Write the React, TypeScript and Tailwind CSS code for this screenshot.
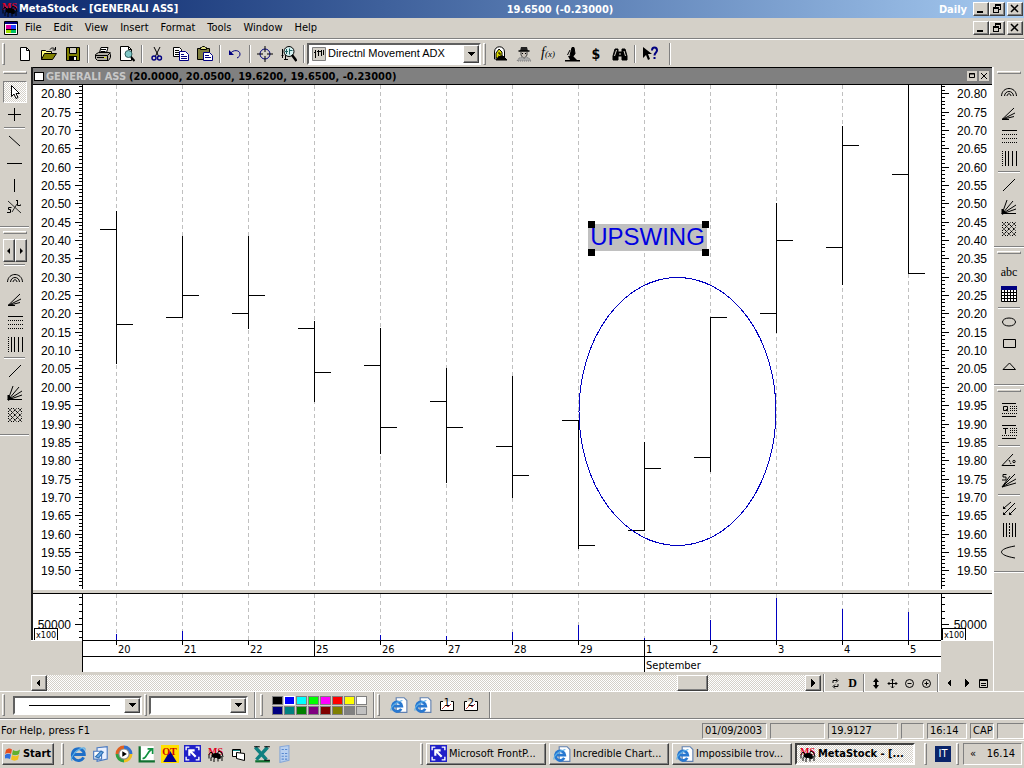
import type { ReactNode } from "react";

/* Shared bevel styles */
const RAISED =
  "bg-[#d4d0c8] border border-t-white border-l-white border-r-[#404040] border-b-[#404040] shadow-[inset_-1px_-1px_0_#808080]";
const SUNKEN =
  "border border-t-[#808080] border-l-[#808080] border-r-white border-b-white";
const DITHER =
  "bg-[repeating-conic-gradient(#ffffff_0_25%,#d4d0c8_0_50%)] bg-[size:2px_2px]";

/* ---------- Data ---------- */

type Bar = {
  day: string;
  open: number;
  high: number;
  low: number;
  close: number;
  volume: number;
};

const BARS: Bar[] = [
  { day: "20", open: 20.43, high: 20.48, low: 20.065, close: 20.17, volume: 6 },
  { day: "21", open: 20.19, high: 20.41, low: 20.19, close: 20.25, volume: 9 },
  { day: "22", open: 20.2, high: 20.41, low: 20.16, close: 20.25, volume: 0 },
  { day: "25", open: 20.16, high: 20.18, low: 19.96, close: 20.04, volume: 0 },
  { day: "26", open: 20.06, high: 20.16, low: 19.82, close: 19.89, volume: 5 },
  { day: "27", open: 19.96, high: 20.05, low: 19.74, close: 19.89, volume: 4 },
  { day: "28", open: 19.84, high: 20.03, low: 19.7, close: 19.76, volume: 8 },
  { day: "29", open: 19.91, high: 19.91, low: 19.56, close: 19.57, volume: 15 },
  { day: "1", open: 19.61, high: 19.85, low: 19.61, close: 19.78, volume: 2 },
  { day: "2", open: 19.81, high: 20.19, low: 19.77, close: 20.19, volume: 20 },
  { day: "3", open: 20.2, high: 20.5, low: 20.15, close: 20.4, volume: 42 },
  { day: "4", open: 20.38, high: 20.71, low: 20.28, close: 20.66, volume: 31 },
  { day: "5", open: 20.58, high: 20.85, low: 20.31, close: 20.31, volume: 28 },
];

const MENUS = ["File", "Edit", "View", "Insert", "Format", "Tools", "Window", "Help"];

const PALETTE = [
  "#000000", "#0000ff", "#00ffff", "#00ff00", "#ff00ff", "#ff0000", "#ffff00", "#ffffff",
  "#000080", "#008080", "#008000", "#800080", "#800000", "#808000", "#808080", "#c0c0c0",
];

const PANE_H = 504;
const PLOT_W = 858;
const priceY = (p: number) => Math.round(8.3 + (20.8 - p) * 366.9);
const barX = (i: number) => 33 + i * 66;

/* ---------- Icons ---------- */

function Icon({ children, size = 16 }: { children: ReactNode; size?: number }) {
  return (
    <svg
      width={size}
      height={size}
      viewBox="0 0 16 16"
      fill="none"
      stroke="#000"
      aria-hidden="true"
      className="shrink-0"
    >
      {children}
    </svg>
  );
}

const icons = {
  app: (
    <Icon>
      <text x="0" y="9" fontSize="10" fill="#e00020" stroke="none" className="font-['Liberation_Serif',serif] font-bold">
        MS
      </text>
      <ellipse cx="8" cy="9.500" rx="4.500" ry="2.500" fill="#000" stroke="none" />
      <ellipse cx="11" cy="11.500" rx="2" ry="1.500" fill="#000" stroke="none" />
      <path d="M5 8 3 6 1 8.500v4M5 10l-2 1.500V15M7 11l-1 2v3M9 8l2-3 3 2 1 4M12 10l2 1v4M10 11v4.500" />
    </Icon>
  ),
  doc: (
    <Icon>
      <path d="M1.500 1.500h13v13h-13z" fill="#fff" />
      <path d="M2 2h12v2H2z" fill="#000080" stroke="none" />
      <path d="M3 5h5v4H3z" fill="#e000a0" stroke="none" />
      <path d="M8 5h5v4H8z" fill="#2040ff" stroke="none" />
      <path d="M3 10h5v3H3z" fill="#a0e000" stroke="none" />
      <path d="M8 10h5v3H8z" fill="#00c060" stroke="none" />
      <path d="M3 9.500h10" />
    </Icon>
  ),
  newFile: (
    <Icon>
      <path d="M3.500 1.500h6l3 3v10h-9z" fill="#fff" />
      <path d="M9.500 1.500v3h3" />
    </Icon>
  ),
  open: (
    <Icon>
      <path d="M.5 13.500v-9h4l1 1h5v2" fill="#ffff80" />
      <path d="M.5 13.500l3-6h12l-4 6z" fill="#808000" />
      <path d="M9 3.500c1-2 4-2 5 0M14.500 1v3h-3" />
    </Icon>
  ),
  save: (
    <Icon>
      <path d="M1.500 1.500h13v13h-13z" fill="#808000" />
      <path d="M4.500 1.500h7v6h-7z" fill="#d4d0c8" />
      <path d="M4 10h8v4.500H4z" fill="#000" stroke="none" />
      <path d="M9 11h2v3H9z" fill="#fff" stroke="none" />
    </Icon>
  ),
  print: (
    <Icon>
      <path d="M4.500 6.500l1.500-5h7l-1.500 5" fill="#fff" />
      <path d="M6 3.500h5M5.500 5.500h5" />
      <path d="M.5 8.500l3-2h11l1 2v3l-2 3h-11l-2-2z" fill="#b0aca4" />
      <path d="M.5 9.500h12l3-3M12.500 9.500v5M2 11.500h9" />
      <path d="M9 11.500h2" stroke="#e0e000" />
    </Icon>
  ),
  preview: (
    <Icon>
      <path d="M1.500.5h8l3 3v11h-11z" fill="#fff" />
      <path d="M9.500.5v3h3" />
      <circle cx="9.500" cy="8" r="3.500" fill="#80c8c8" stroke="#306060" />
      <path d="M12 11l3.500 4" strokeWidth="2" />
    </Icon>
  ),
  cut: (
    <Icon>
      <path d="M5 1l4.500 9M11 1L6.500 10" />
      <circle cx="5" cy="12" r="2" stroke="#000080" strokeWidth="1.400" />
      <circle cx="10.500" cy="12" r="2" stroke="#000080" strokeWidth="1.400" />
    </Icon>
  ),
  copy: (
    <Icon>
      <path d="M.5 1.500h6l2 2v7h-8z" fill="#fff" />
      <path d="M2 4.500h4M2 6.500h5M2 8.500h5" />
      <path d="M6.500 5.500h6l3 3v6h-9z" fill="#fff" stroke="#000080" />
      <path d="M8 8.500h3M8 10.500h6M8 12.500h6" stroke="#000080" />
    </Icon>
  ),
  paste: (
    <Icon>
      <path d="M.5 2.500h12v11H.5z" fill="#808040" />
      <path d="M3.500 3.500h6v-2h-1l-1-1h-2l-1 1h-1z" fill="#e0e080" />
      <path d="M6.500 6.500h6l3 3v5h-9z" fill="#fff" stroke="#000080" />
      <path d="M8 9.500h4M8 11.500h6" stroke="#000080" />
    </Icon>
  ),
  undo: (
    <Icon>
      <path d="M3 8c3-5 10-4 10 0 0 2-1 3-3 4" stroke="#000080" />
      <path d="M2 4v5h5z" fill="#000080" stroke="none" />
    </Icon>
  ),
  crosshair: (
    <Icon>
      <circle cx="8" cy="8" r="5" stroke="#000080" />
      <path d="M8 0v6M8 10v6M0 8h6M10 8h6" />
    </Icon>
  ),
  zoom: (
    <Icon>
      <path d="M1.500 3v9M.5 9.500h2M4.500 9v5M3 13.500h4" />
      <circle cx="8" cy="5.500" r="5" fill="#d4f0f0" />
      <path d="M5.500 3v5M8.500 2.500v6M4 5.500h3M8.500 4.500h3" stroke="#206060" />
      <path d="M11 9l4.500 6" strokeWidth="2.500" />
    </Icon>
  ),
  indicator: (
    <Icon>
      <path d="M1.500 1.500h13v13h-13z" fill="#d4d0c8" stroke="#808080" />
      <path d="M4.500 4v8M3 6.500h2M7.500 4v6M6 5.500h3M10.500 4v6M9 5.500h2M12.500 4v5" />
    </Icon>
  ),
  expert: (
    <Icon>
      <path d="M2.500 13V6c0-7 10-7 10 0v7z" fill="#fff" />
      <path d="M4 12V7l3-4 3 3v6z" fill="#d8d800" />
      <path d="M7 6v2h2M6 10l4 2" />
      <path d="M8 10h3l4 4H4z" fill="#000" />
    </Icon>
  ),
  advisor: (
    <Icon>
      <path d="M5 1h6l1 4H4z" fill="#222" stroke="none" />
      <path d="M2.500 5h11" strokeWidth="1.500" />
      <path d="M5 6v3l2 3h2l2-3V6" fill="#c8c0b8" stroke="#444" />
      <path d="M6 7.500h1M9 7.500h1" />
      <path d="M1 15l2-3 4-1 1 2 1-2 4 1 2 3z" fill="#aaa" stroke="#777" strokeDasharray="1 1" />
    </Icon>
  ),
  microscope: (
    <Icon>
      <path d="M8 1.500h2l1 6-2 3-3-1z" fill="#000" />
      <path d="M6 4L3.500 9" />
      <path d="M4 10h5l4 4h3v1.500H1V14h5z" fill="#000" stroke="none" />
    </Icon>
  ),
  binoculars: (
    <Icon>
      <path d="M3 3h3v3h4V3h3l2 7v4h-5v-4H6v4H1v-4z" fill="#000" />
      <path d="M4.500 4L2.500 10M12 5l1.500 5M8 7v2" stroke="#d4d0c8" />
    </Icon>
  ),
  helpArrow: (
    <Icon>
      <path d="M1 1v11l3-3 2 5 2-1-2-5h4z" fill="#000" stroke="none" />
      <path d="M10 4.500c0-4 5-4 5 0 0 2-2.500 2-2.500 5M12.500 11v2" stroke="#000080" strokeWidth="2" />
    </Icon>
  ),
  pointer: (
    <Icon>
      <path d="M4.500 1.500v11l2.500-2.500 2 4.500 2-1-2-4h3.500z" fill="#fff" />
    </Icon>
  ),
  plus: <Icon><path d="M7.500 2v13M1 8.500h13" /></Icon>,
  down: <Icon><path d="M2 3l11 10" /></Icon>,
  horizontal: <Icon><path d="M0 8.500h15" /></Icon>,
  vertical: <Icon><path d="M7.500 2v13" /></Icon>,
  speed: (
    <Icon>
      <path d="M1 2l13 12M5 13l5-8" strokeWidth=".8" />
      <path d="M4.500 8.500h-3v2h2v3H0M9 1.500h2M10.500 1.500v5h3v-1" />
    </Icon>
  ),
  arcs: (
    <Icon>
      <path d="M.5 12C1 2 15 2 15.500 12M3.500 12c.5-6 8.500-6 9 0M6 12c.5-3 3.500-3 4 0" />
    </Icon>
  ),
  fan: <Icon><path d="M1 13.500h7M1 13.500L13 2M1 13.500L14 7M1 13.500l12-3" /></Icon>,
  dashes: (
    <Icon>
      <path d="M1 2.500h15" />
      <path d="M1 6.500h15M1 10.500h15M1 14.500h15" strokeDasharray="1 1" />
    </Icon>
  ),
  bars: (
    <Icon>
      <path d="M1.500 1v15" strokeDasharray="1 1" />
      <path d="M4.500 1v15M7.500 1v15M11.500 1v15M15.500 1v15" />
    </Icon>
  ),
  slash: <Icon><path d="M2 14L14 2" /></Icon>,
  fan2: (
    <Icon>
      <path d="M1 15L6 1M1 15L12 2M1 15L15 6M1 15L15 10M1 14.500h14" />
      <path d="M1 15v-5l4 4z" fill="#000" />
    </Icon>
  ),
  mesh: (
    <Icon>
      <path
        d="M1 5l4-4M1 10l9-9M1 15L15 1M6 15l9-9M11 15l4-4M11 1l4 4M6 1l9 9M1 1l14 14M1 6l9 9M1 11l4 4"
        strokeDasharray="1.500 .6"
      />
    </Icon>
  ),
  grid: (
    <Icon>
      <path d="M.5.5h15v15H.5z" fill="#fff" />
      <path d="M0 0h16v4H0z" fill="#000080" stroke="none" />
      <path d="M3.500 4v12M6.500 4v12M9.500 4v12M12.500 4v12M0 6.500h16M0 9.500h16M0 12.500h16" />
    </Icon>
  ),
  ellipse: <Icon><ellipse cx="8" cy="9" rx="6.500" ry="4" /></Icon>,
  rect: <Icon><path d="M2.500 4.500h12v8h-12z" /></Icon>,
  triangle: <Icon><path d="M2 12.500L8.500 6l6 6.500z" /></Icon>,
  quadrant: (
    <Icon>
      <path d="M1 1.500h14M1 14.500h14M2.500 4.500h4v4h-4zM5 7l2 2.500" />
      <path d="M9 4.500h7M9 6.500h7M9 8.500h7M1 11.500h15" strokeDasharray="1 1" />
    </Icon>
  ),
  tirone: (
    <Icon>
      <path d="M1 1.500h14M1 14.500h14M2 4.500h5M4.500 4v6" />
      <path d="M9 4.500h7M9 6.500h7M9 8.500h7M1 11.500h15" strokeDasharray="1 1" />
    </Icon>
  ),
  angle: (
    <Icon>
      <path d="M14 14.500H1L12 3" />
      <path d="M8 9l2 4" strokeDasharray="2 1" />
      <circle cx="13" cy="10.500" r="1.200" />
    </Icon>
  ),
  speedFan: (
    <Icon>
      <path d="M1 14L9 3M1 14L14 1M1 14l14-8M1 14l14-4" />
      <path d="M5.500 1.500H2v2.500h3v3H1" />
    </Icon>
  ),
  arrows: (
    <Icon>
      <path d="M3 8l7-6M3 14L14 3M9 14l6-6" />
      <path d="M2 6v3h3zM2 12v3h3zM8 12v3h3z" fill="#000" stroke="none" />
    </Icon>
  ),
  channels: (
    <Icon>
      <path d="M2.500 1v14M5.500 1v14M11.500 1v14M14.500 1v14" />
      <path d="M8.500 1v14" strokeDasharray="2 1" />
    </Icon>
  ),
  curve: <Icon><path d="M14 2C-4 5-4 11 14 14" /></Icon>,
  ie: (
    <Icon size={18}>
      <path d="M13 11a5.300 5.300 0 1 1 .6-2.500H4" stroke="#1f6fc8" strokeWidth="2.600" />
      <path d="M3 14c-3-1 2-9 8-11 3-1 4 0 3 2" stroke="#58aee8" />
    </Icon>
  ),
  iePage: (
    <Icon size={18}>
      <path d="M5.500 1.500h7l2.500 2.500v10.500H5.500z" fill="#fff" stroke="#6080b0" />
      <path d="M10 11.500a4.200 4.200 0 1 1 .5-2.500H3" stroke="#2878d0" strokeWidth="2.400" />
      <path d="M1 13c-1-3 4-8 10-9" stroke="#58aee8" />
    </Icon>
  ),
  desktop: (
    <Icon size={18}>
      <path d="M4.500 2.500l9-1v11l-9 2z" fill="#e8f0ff" stroke="#4878c0" />
      <path d="M1.500 5.500h7v7h-7z" fill="#fff" stroke="#4878c0" />
      <path d="M3 10.500l5-5 2 1-4 5z" fill="#68a8e8" stroke="#3070b0" />
    </Icon>
  ),
  media: (
    <Icon size={18}>
      <path d="M8 2a6 6 0 0 0-6 6" stroke="#e06020" strokeWidth="3" />
      <path d="M2 8a6 6 0 0 0 6 6" stroke="#30a040" strokeWidth="3" />
      <path d="M8 14a6 6 0 0 0 6-6" stroke="#f0c020" strokeWidth="3" />
      <path d="M14 8a6 6 0 0 0-6-6" stroke="#3070d0" strokeWidth="3" />
      <circle cx="8" cy="8" r="4.500" fill="#fff" stroke="#888" />
      <path d="M6.500 5.500l4 2.500-4 2.500z" fill="#000" stroke="none" />
    </Icon>
  ),
  chart: (
    <Icon size={18}>
      <path d="M1 1h13v14H1z" fill="#fff" stroke="none" />
      <path d="M1.500 1v13.500H15" stroke="#107030" strokeWidth="2" />
      <path d="M4 12c4 0 3-5 8-8M8.500 3.500H13V8" stroke="#109040" strokeWidth="1.500" />
    </Icon>
  ),
  quote: (
    <Icon size={18}>
      <path d="M0 0h16v16H0z" fill="#ffe000" stroke="none" />
      <path d="M8 5l6 10H2z" fill="#000090" stroke="none" />
      <text x="1" y="9" fontSize="9" fill="#d00000" stroke="none" className="font-['Liberation_Serif',serif] font-bold">
        OT
      </text>
    </Icon>
  ),
  frontpage: (
    <Icon size={17}>
      <path d="M0 0h16v16H0z" fill="#2020c8" stroke="none" />
      <path d="M2 5V2h3M11 2h3v3M14 11v3h-3M5 14H2v-3" stroke="#fff" strokeWidth="1.300" />
      <path d="M5 10V5h5M5.500 5.500L11 11" stroke="#fff" strokeWidth="2" />
    </Icon>
  ),
  windows2: (
    <Icon>
      <path d="M1.500 3.500h8v7h-8z" fill="#fff" />
      <path d="M5.500 6.500l8 1v7l-8-2z" fill="#fff" />
      <path d="M2 4.500h7" stroke="#108080" />
    </Icon>
  ),
  excel: (
    <Icon size={18}>
      <path d="M2 13.500h13v2H2z" fill="#107030" stroke="none" />
      <path d="M2 2l10 11M13 2L3 13" stroke="#108080" strokeWidth="3" />
      <path d="M1 1.500h5M10 1.500h5M10 13.500h5" />
    </Icon>
  ),
  calc: (
    <Icon size={18}>
      <path d="M3.500 1.500l8-1v13l-8 2z" fill="#b8d0f0" stroke="#88a8d8" />
      <path d="M5 4h5M5 7.500h5M5 10h5M5 12.500h5" stroke="#5888d0" strokeDasharray="2 1" />
    </Icon>
  ),
  box: (
    <Icon>
      <path d="M4 4.500H1.500v9h13v-9H12" fill="#fff" />
      <path d="M3 12l4-4 2 2 3-3" stroke="#c04040" />
    </Icon>
  ),
  winLogo: (
    <Icon>
      <path d="M1 4c2-2 4-2 6-.5L6 8C4 6.500 2 7 0 8z" fill="#e85020" stroke="none" />
      <path d="M8 4c2 1.500 4 1.500 7-.5L14 8c-2 1.500-5 1.500-7 .5z" fill="#60b030" stroke="none" />
      <path d="M0 9c2-1.500 4-1.500 6-.5L5 13c-2-1-4-1-6 0z" fill="#3070e0" stroke="none" />
      <path d="M7 9c2 1.500 4 1.500 7 0l-1 4.500c-2 1.500-5 1.500-7 0z" fill="#f0c020" stroke="none" />
    </Icon>
  ),
};

type IconName = keyof typeof icons;

/* ---------- Small building blocks ---------- */

function ToolButton({ label, children }: { label: string; children: ReactNode }) {
  return (
    <button type="button" aria-label={label} className="flex h-[22px] w-6 shrink-0 items-center justify-center">
      {children}
    </button>
  );
}

function Grip() {
  return <span className="h-[22px] w-[3px] shrink-0 border border-t-white border-l-white border-r-[#808080] border-b-[#808080]" />;
}

function Sep() {
  return (
    <span className="flex w-1.5 shrink-0 justify-center">
      <span className="h-[18px] w-0.5 border-l border-l-[#808080] border-r border-r-white" />
    </span>
  );
}

function HSep() {
  return (
    <span className="flex h-[5px] w-full items-center px-1">
      <span className="h-0.5 w-full border-t border-t-[#808080] border-b border-b-white" />
    </span>
  );
}

function Arrow({ dir }: { dir: "left" | "right" | "down" }) {
  const d = { left: "M6 1v8L2 5z", right: "M3 1v8l4-4z", down: "M1 3h8L5 7z" }[dir];
  return (
    <svg width="10" height="10" viewBox="0 0 10 10" aria-hidden="true" shapeRendering="crispEdges">
      <path d={d} />
    </svg>
  );
}

function DropArrow() {
  return (
    <span className={`pointer-events-none absolute top-0.5 right-0.5 bottom-0.5 flex w-4 items-center justify-center ${RAISED}`}>
      <Arrow dir="down" />
    </span>
  );
}

function WindowButtons() {
  const cls = `flex h-[14px] w-4 items-center justify-center ${RAISED}`;
  return (
    <div className="flex shrink-0 items-center">
      <button type="button" aria-label="Minimize" className={cls}>
        <svg width="10" height="10" viewBox="0 0 10 10"><path d="M1 7h6v2H1z" /></svg>
      </button>
      <button type="button" aria-label="Restore" className={cls}>
        <svg width="10" height="10" viewBox="0 0 10 10" fill="none" stroke="#000" shapeRendering="crispEdges">
          <path d="M3.500 3V.5h5v5H7M3 1.500h6M1.500 3.500h5v5h-5zM1 4.500h6" />
        </svg>
      </button>
      <button type="button" aria-label="Close" className={`ml-0.5 ${cls}`}>
        <svg width="10" height="10" viewBox="0 0 10 10" stroke="#000" strokeWidth="1.500">
          <path d="M1 1l7 7M8 1L1 8" />
        </svg>
      </button>
    </div>
  );
}

/* ---------- Top bars ---------- */

function TitleBar() {
  return (
    <header className="grid h-[18px] grid-cols-[1fr_auto_1fr] items-center bg-linear-to-r from-[#0a246a] to-[#a6caf0] text-[11px] font-bold text-white">
      <div className="flex items-center gap-px pl-0.5">
        {icons.app}
        <h1>MetaStock - [GENERALI ASS]</h1>
      </div>
      <span className="pt-0.5 pl-24">19.6500 (-0.23000)</span>
      <div className="flex items-center justify-end gap-1.5 pr-px">
        <span className="pt-0.5">Daily</span>
        <WindowButtons />
      </div>
    </header>
  );
}

function MenuBar() {
  return (
    <nav className="flex h-[22px] items-center justify-between border-b border-b-white pb-0.5 pl-[3px] shadow-[inset_0_-1px_0_#808080]">
      <div className="flex items-center">
        {icons.doc}
        {MENUS.map((m) => (
          <button key={m} type="button" className="px-1.5">
            {m}
          </button>
        ))}
      </div>
      <div className="pr-px">
        <WindowButtons />
      </div>
    </nav>
  );
}

function MainToolbar() {
  return (
    <div className="flex h-[27px] items-center">
      <div className="flex items-center border-r border-r-[#808080] pr-[7px] shadow-[1px_0_0_#ffffff]">
        <span className="flex w-[13px] pl-0.5"><Grip /></span>
        <ToolButton label="New">{icons.newFile}</ToolButton>
        <ToolButton label="Open">{icons.open}</ToolButton>
        <ToolButton label="Save">{icons.save}</ToolButton>
        <Sep />
        <ToolButton label="Print">{icons.print}</ToolButton>
        <ToolButton label="Print preview">{icons.preview}</ToolButton>
        <Sep />
        <ToolButton label="Cut">{icons.cut}</ToolButton>
        <ToolButton label="Copy">{icons.copy}</ToolButton>
        <ToolButton label="Paste">{icons.paste}</ToolButton>
        <Sep />
        <ToolButton label="Undo">{icons.undo}</ToolButton>
        <Sep />
        <ToolButton label="Crosshairs">{icons.crosshair}</ToolButton>
        <ToolButton label="Zoom">{icons.zoom}</ToolButton>
        <Sep />
        <div className="relative w-[174px]">
          <span className="pointer-events-none absolute top-[3px] left-1">{icons.indicator}</span>
          <select
            aria-label="Indicator"
            className="block h-[22px] w-full appearance-none border-2 border-t-[#606060] border-r-white border-b-white border-l-[#606060] bg-white pb-0.5 pl-[19px] font-['Liberation_Sans',sans-serif] text-[11px]"
          >
            <option>Directnl Movement ADX</option>
          </select>
          <DropArrow />
        </div>
        <span className="flex w-[7px] justify-center"><Grip /></span>
        <ToolButton label="Expert commentary">{icons.expert}</ToolButton>
        <ToolButton label="Expert advisor">{icons.advisor}</ToolButton>
        <ToolButton label="Indicator builder">
          <span className="font-['Liberation_Serif',serif] text-[14px] italic">
            f<span className="text-[9px]">(x)</span>
          </span>
        </ToolButton>
        <ToolButton label="Explorer">{icons.microscope}</ToolButton>
        <ToolButton label="System tester">
          <span className="text-[14px] font-bold">$</span>
        </ToolButton>
        <ToolButton label="Find">{icons.binoculars}</ToolButton>
        <Sep />
        <ToolButton label="What's this?">{icons.helpArrow}</ToolButton>
      </div>
    </div>
  );
}

/* ---------- Side toolbars ---------- */

function SideGroup({
  children,
  bottom = "pb-2",
  gap = "mb-[7px]",
}: {
  children: ReactNode;
  bottom?: string;
  gap?: string;
}) {
  return (
    <div className={`flex flex-col items-center border-b border-b-[#808080] pt-1 shadow-[0_1px_0_#ffffff] ${bottom}`}>
      <span className={`h-[3px] w-6 border border-t-white border-l-white border-r-[#808080] border-b-[#808080] ${gap}`} />
      {children}
    </div>
  );
}

function SideTools({ names }: { names: IconName[] }) {
  return (
    <>
      {names.map((n) => (
        <ToolButton key={n} label={n}>
          {icons[n]}
        </ToolButton>
      ))}
    </>
  );
}

function LeftTools() {
  return (
    <aside className="w-[31px] shrink-0 pr-0.5">
      <SideGroup>
        <button type="button" aria-label="Select" className={`flex h-[22px] w-6 items-center justify-center ${SUNKEN} ${DITHER}`}>
          {icons.pointer}
        </button>
        <SideTools names={["plus"]} />
        <HSep />
        <SideTools names={["down", "horizontal", "vertical", "speed"]} />
      </SideGroup>
      <SideGroup gap="mb-[5px]">
        <div className="flex">
          <button type="button" aria-label="Previous" className={`flex h-[23px] w-3 items-center justify-center ${RAISED}`}>
            <svg width="4" height="6" viewBox="0 0 4 6"><path d="M3 0v6L0 3z" /></svg>
          </button>
          <button type="button" aria-label="Next" className={`flex h-[23px] w-3 items-center justify-center ${RAISED}`}>
            <svg width="4" height="6" viewBox="0 0 4 6"><path d="M1 0v6l3-3z" /></svg>
          </button>
        </div>
        <HSep />
        <SideTools names={["arcs", "fan", "dashes", "bars"]} />
        <HSep />
        <SideTools names={["slash", "fan2", "mesh"]} />
      </SideGroup>
    </aside>
  );
}

function RightTools() {
  return (
    <aside className="w-[31px] shrink-0 border-l border-l-white">
      <SideGroup bottom="pb-1.5">
        <SideTools names={["arcs", "fan", "dashes", "bars"]} />
        <HSep />
        <SideTools names={["slash", "fan2", "mesh"]} />
      </SideGroup>
      <SideGroup>
        <ToolButton label="Text">
          <span className="font-['Liberation_Serif',serif] text-[12px]">abc</span>
        </ToolButton>
        <SideTools names={["grid"]} />
        <HSep />
        <SideTools names={["ellipse", "rect", "triangle"]} />
      </SideGroup>
      <SideGroup>
        <SideTools names={["quadrant", "tirone"]} />
        <HSep />
        <SideTools names={["angle", "speedFan"]} />
        <HSep />
        <SideTools names={["arrows", "channels", "curve"]} />
      </SideGroup>
    </aside>
  );
}

/* ---------- Chart ---------- */

function PriceAxis({ side }: { side: "left" | "right" }) {
  const left = side === "left";
  const ticks = Array.from({ length: 138 }, (_, i) => 2082 - i);
  return (
    <svg
      width={left ? 50 : 51}
      height={PANE_H}
      className="shrink-0 bg-white font-['Liberation_Sans',sans-serif] text-[12px]"
      shapeRendering="crispEdges"
    >
      <rect x={left ? 49 : 0} width="1" height={PANE_H} />
      {ticks.map((t) => {
        const major = t % 5 === 0;
        const len = major ? 8 : 4;
        const y = priceY(t / 100);
        return (
          <g key={t}>
            <rect x={left ? 50 - len : 0} y={y} width={len} height="1" />
            {major && t >= 1950 && (
              <text x={left ? 38 : 46} y={y + 5} textAnchor="end">
                {(t / 100).toFixed(2)}
              </text>
            )}
          </g>
        );
      })}
    </svg>
  );
}

function VolumeAxis({ side }: { side: "left" | "right" }) {
  const left = side === "left";
  return (
    <svg
      width={left ? 50 : 51}
      height="46"
      className="shrink-0 bg-white font-['Liberation_Sans',sans-serif] text-[12px]"
      shapeRendering="crispEdges"
    >
      <rect x={left ? 49 : 0} width="1" height="46" />
      {[3, 10, 17, 24, 30, 37, 43].map((y) => {
        const len = y === 30 ? 8 : 4;
        return <rect key={y} x={left ? 50 - len : 0} y={y} width={len} height="1" />;
      })}
      <text x={left ? 38 : 46} y="35" textAnchor="end">
        50000
      </text>
      <rect x="1.500" y="34.500" width="23" height="12" fill="#fff" stroke="#000" />
      <text x="3" y="44" fontSize="9" className="font-['DejaVu_Sans_Condensed',sans-serif]">
        x100
      </text>
    </svg>
  );
}

function GridLines({ height }: { height: number }) {
  return (
    <>
      {BARS.map((b, i) => (
        <line
          key={b.day}
          x1={barX(i) + 0.5}
          x2={barX(i) + 0.5}
          y1="0"
          y2={height}
          stroke="#c0c0c0"
          strokeDasharray="4 3"
        />
      ))}
    </>
  );
}

function PricePlot() {
  return (
    <div className="relative min-w-0 flex-1 bg-white">
      <svg
        viewBox={`0 0 ${PLOT_W} ${PANE_H}`}
        preserveAspectRatio="none"
        className="block h-[504px] w-full"
        shapeRendering="crispEdges"
      >
        <GridLines height={PANE_H} />
        {BARS.map((b, i) => {
          const x = barX(i);
          const top = Math.max(priceY(b.high), 0);
          return (
            <g key={b.day}>
              <rect x={x} y={top} width="1" height={priceY(b.low) - top + 1} />
              <rect x={x - 16} y={priceY(b.open)} width="16" height="1" />
              <rect x={x} y={priceY(b.close)} width="17" height="1" />
            </g>
          );
        })}
        <ellipse cx="594.500" cy="326.500" rx="98.500" ry="134" fill="none" stroke="#0000c0" />
      </svg>
      <div className="absolute top-[139px] left-[505px] h-[27px] w-[119px] bg-[#c0c0c0] text-center font-['Liberation_Sans',sans-serif] text-[24px] leading-[25px] text-[#0000e0]">
        UPSWING
        <i className="absolute -top-[3px] left-0 size-[7px] bg-black" />
        <i className="absolute -top-[3px] -right-0.5 size-[7px] bg-black" />
        <i className="absolute -bottom-[5px] left-0 size-[7px] bg-black" />
        <i className="absolute -right-0.5 -bottom-[5px] size-[7px] bg-black" />
      </div>
    </div>
  );
}

function VolumePlot() {
  return (
    <svg
      viewBox={`0 0 ${PLOT_W} 46`}
      preserveAspectRatio="none"
      className="h-[46px] min-w-0 flex-1 bg-white"
      shapeRendering="crispEdges"
    >
      <GridLines height={46} />
      {BARS.map((b, i) => (
        <rect key={b.day} x={barX(i)} y={46 - b.volume} width="1" height={b.volume} fill="#0000c0" />
      ))}
    </svg>
  );
}

function DateAxis() {
  return (
    <svg
      viewBox={`0 0 ${PLOT_W} 32`}
      preserveAspectRatio="none"
      className="h-8 min-w-0 flex-1 border-l border-l-black bg-white text-[11px]"
      shapeRendering="crispEdges"
    >
      <rect width={PLOT_W} height="1" />
      <rect y="16" width={PLOT_W} height="1" />
      {BARS.map((b, i) => (
        <g key={b.day}>
          <rect x={barX(i)} width="1" height={b.day === "25" ? 16 : b.day === "1" ? 32 : 5} />
          <text x={barX(i) + 2} y="13">{b.day}</text>
        </g>
      ))}
      <text x={barX(8) + 2} y="29">September</text>
    </svg>
  );
}

function ScrollRow() {
  const btn = `flex h-4 w-4 shrink-0 items-center justify-center ${RAISED}`;
  const tool = "flex h-4 w-[17px] items-center justify-center";
  return (
    <div className="mt-[3px] flex h-4 items-center pr-px">
      <button type="button" aria-label="Scroll left" className={btn}><Arrow dir="left" /></button>
      <span className={`h-full flex-1 ${DITHER}`} />
      <span className={`h-full w-[31px] ${RAISED}`} />
      <span className={`h-full w-[97px] ${DITHER}`} />
      <button type="button" aria-label="Scroll right" className={btn}><Arrow dir="right" /></button>
      <Sep />
      <button type="button" aria-label="Refresh" className={tool}>
        <svg width="9" height="11" viewBox="0 0 9 11" fill="none" stroke="#000">
          <path d="M2 5V2.500h4M5 .5l2 2-2 2M7 6v2.500H3M4 6.500l-2 2 2 2" />
        </svg>
      </button>
      <button type="button" aria-label="Daily" className={`${tool} font-['Liberation_Serif',serif] text-[12px] font-bold`}>D</button>
      <Sep />
      <button type="button" aria-label="Rescale" className={tool}>
        <svg width="8" height="11" viewBox="0 0 8 11"><path d="M4 0l3 4H5v3h2L4 11 1 7h2V4H1z" /></svg>
      </button>
      <button type="button" aria-label="Move" className={tool}>
        <svg width="11" height="11" viewBox="0 0 11 11" stroke="#000" fill="none">
          <path d="M5.500 1v9M1 5.500h9M4 2.500L5.500 1 7 2.500M4 8.500L5.500 10 7 8.500M2.500 4L1 5.500 2.500 7M8.500 4L10 5.500 8.500 7" />
        </svg>
      </button>
      <button type="button" aria-label="Zoom out" className={tool}>
        <svg width="11" height="11" viewBox="0 0 11 11" stroke="#000" fill="none">
          <circle cx="5.500" cy="5.500" r="4" /><path d="M3.500 5.500h4" />
        </svg>
      </button>
      <button type="button" aria-label="Zoom in" className={tool}>
        <svg width="11" height="11" viewBox="0 0 11 11" stroke="#000" fill="none">
          <circle cx="5.500" cy="5.500" r="4" /><path d="M3.500 5.500h4M5.500 3.500v4" />
        </svg>
      </button>
      <Sep />
      <button type="button" aria-label="Previous chart" className={tool}><Arrow dir="left" /></button>
      <button type="button" aria-label="Next chart" className={tool}><Arrow dir="right" /></button>
      <button type="button" aria-label="Chart list" className={tool}>
        <svg width="9" height="9" viewBox="0 0 9 9" stroke="#000" fill="none">
          <path d="M.5.5h8v8h-8zM.5 1.500h8M2 4.500h5M2 6.500h5" />
        </svg>
      </button>
    </div>
  );
}

function ChartWindow() {
  return (
    <section className="min-w-0 flex-1">
      <div className="border-l-2 border-l-[#202020] border-r border-r-white">
        <div className="flex h-[18px] items-center justify-between border-t border-b border-black bg-[#808080] pr-[3px] pl-px">
          <div className="flex items-center gap-0.5 text-[11px] leading-none font-bold">
            <span className="h-[9px] w-2.5 border border-black bg-white" />
            <h2 className="flex gap-[3px] text-black">
              <span className="text-[#c8c8c8]">GENERALI ASS</span>
              <span>(20.0000, 20.0500, 19.6200, 19.6500, -0.23000)</span>
            </h2>
          </div>
          <div className="flex gap-0.5">
            <button type="button" aria-label="Maximize chart" className="flex h-2.5 w-2.5 items-center justify-center bg-[#d4d0c8]">
              <svg width="6" height="6" viewBox="0 0 6 6" fill="none" stroke="#000"><path d="M.5.5h5v4h-5zM0 1h6" /></svg>
            </button>
            <button type="button" aria-label="Close chart" className="flex h-2.5 w-2.5 items-center justify-center bg-[#d4d0c8]">
              <svg width="6" height="6" viewBox="0 0 6 6" stroke="#000"><path d="M0 0l6 6M6 0L0 6" /></svg>
            </button>
          </div>
        </div>
        <div className="flex">
          <PriceAxis side="left" />
          <PricePlot />
          <PriceAxis side="right" />
        </div>
        <div className="h-[5px] border-t border-t-white border-b border-b-black bg-[#d4d0c8]" />
        <div className="flex">
          <VolumeAxis side="left" />
          <VolumePlot />
          <VolumeAxis side="right" />
        </div>
      </div>
      <div className="flex pr-[52px] pl-[51px] shadow-[inset_0_1px_0_#ffffff]">
        <DateAxis />
      </div>
      <ScrollRow />
    </section>
  );
}

/* ---------- Bottom bars ---------- */

function FormatBar() {
  return (
    <div className="flex h-7 items-center border-t border-t-white border-b border-b-[#808080] shadow-[0_1px_0_#ffffff]">
      <span className="flex w-[13px] pl-0.5"><Grip /></span>
      <div className="relative w-[129px]">
        <select aria-label="Line style" className="block h-[19px] w-full appearance-none border-2 border-t-[#606060] border-r-white border-b-white border-l-[#606060] bg-white">
          <option aria-label="Solid" />
        </select>
        <span className="pointer-events-none absolute top-[9px] right-8 left-4 h-px bg-black" />
        <DropArrow />
      </div>
      <span className="flex w-[7px] justify-center"><Grip /></span>
      <div className="relative w-[99px]">
        <select aria-label="Line weight" className="block h-[19px] w-full appearance-none border-2 border-t-[#606060] border-r-white border-b-white border-l-[#606060] bg-white">
          <option aria-label="None" />
        </select>
        <DropArrow />
      </div>
      <span className="ml-1.5 h-full border-l border-l-[#808080] border-r border-r-white" />
      <span className="flex w-4 pl-1"><Grip /></span>
      <div className="grid grid-cols-8 gap-px">
        {PALETTE.map((c) => (
          <button
            key={c}
            type="button"
            aria-label={`Colour ${c}`}
            className={`h-[9px] w-[11px] border ${c === "#0000ff" ? "border-white" : "border-[#808080]"}`}
            style={{ backgroundColor: c }}
          />
        ))}
      </div>
      <span className="ml-1.5 h-full border-l border-l-[#808080] border-r border-r-white" />
      <span className="flex w-3 pl-0.5"><Grip /></span>
      <ToolButton label="Web page">{icons.iePage}</ToolButton>
      <ToolButton label="Web search">{icons.iePage}</ToolButton>
      {["1", "2"].map((n) => (
        <ToolButton key={n} label={`Layout ${n}`}>
          <span className="relative">
            {icons.box}
            <span className="absolute inset-x-0 top-0 text-center text-[11px] leading-none">{n}</span>
          </span>
        </ToolButton>
      ))}
      <span className="ml-1.5 h-full border-l border-l-[#808080] border-r border-r-white" />
    </div>
  );
}

function StatusBar() {
  const cell = `h-4 px-0.5 leading-[14px] ${SUNKEN}`;
  return (
    <div className="flex h-[21px] items-center gap-[3px] pt-0.5">
      <span className="flex-1 pl-px">For Help, press F1</span>
      <span className={`w-[65px] ${cell}`}>01/09/2003</span>
      <span className={`w-[55px] ${cell}`} />
      <span className={`w-[70px] ${cell}`}>19.9127</span>
      <span className={`w-[23px] ${cell}`} />
      <span className={`w-10 ${cell}`}>16:14</span>
      <span className={`w-6 ${cell}`}>CAP</span>
      <span className={`w-[27px] ${cell}`} />
    </div>
  );
}

function Task({ icon, children, active = false }: { icon: IconName; children: ReactNode; active?: boolean }) {
  return (
    <button
      type="button"
      className={`flex h-[22px] w-[120px] shrink-0 items-center gap-0.5 px-[3px] whitespace-nowrap ${
        active ? `border-2 border-t-[#404040] border-l-[#404040] border-r-white border-b-white font-bold ${DITHER}` : RAISED
      }`}
    >
      {icons[icon]}
      {children}
    </button>
  );
}

function Taskbar() {
  const quick: IconName[] = ["ie", "desktop", "media", "chart", "quote", "frontpage", "app", "windows2", "excel", "calc"];
  return (
    <footer className="flex h-7 items-center border-t border-t-white pb-0.5 pl-0.5">
      <button type="button" className={`flex h-[22px] w-[52px] items-center justify-center gap-0.5 text-[11px] font-bold ${RAISED}`}>
        {icons.winLogo}
        Start
      </button>
      <span className="flex w-3 justify-end pr-0.5"><Grip /></span>
      <div className="flex">
        {quick.map((n) => (
          <button key={n} type="button" aria-label={n} className="flex h-[22px] w-[23px] items-center justify-center">
            {icons[n]}
          </button>
        ))}
      </div>
      <span className="flex-1" />
      <Grip />
      <div className="flex gap-[3px] pl-[3px]">
        <Task icon="frontpage">Microsoft FrontP...</Task>
        <Task icon="iePage">Incredible Chart...</Task>
        <Task icon="iePage">Impossibile trov...</Task>
        <Task icon="app" active>MetaStock - [...</Task>
      </div>
      <span className="flex w-5 justify-center"><Grip /></span>
      <span className="flex size-4 items-center justify-center bg-[#0a246a] text-white">IT</span>
      <span className="flex w-3 justify-center"><Grip /></span>
      <div className={`mr-0.5 flex h-[22px] w-[59px] items-center justify-between px-1.5 ${SUNKEN}`}>
        <button type="button" aria-label="Show hidden icons">«</button>
        <span>16.14</span>
      </div>
    </footer>
  );
}

export default function App() {
  return (
    <div className="bg-[#d4d0c8] font-['DejaVu_Sans_Condensed','DejaVu_Sans',sans-serif] text-[11px] leading-[14px] text-black">
      <TitleBar />
      <MenuBar />
      <MainToolbar />
      <main className="flex">
        <LeftTools />
        <ChartWindow />
        <RightTools />
      </main>
      <FormatBar />
      <StatusBar />
      <Taskbar />
    </div>
  );
}
